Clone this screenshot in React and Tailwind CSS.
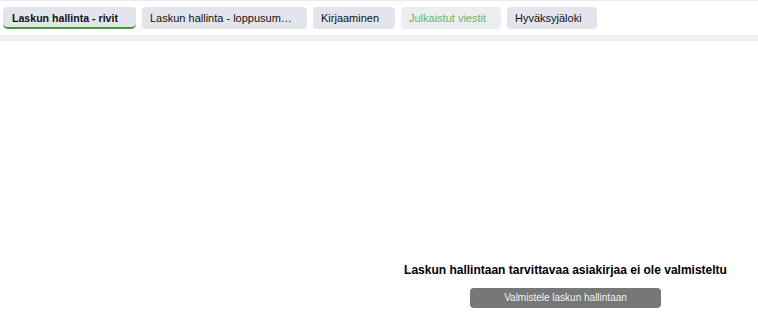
import React from "react";

const tabs = [
  { label: "Laskun hallinta - rivit", active: true, w: "w-[133px]" },
  { label: "Laskun hallinta - loppusummat", w: "w-[165px]" },
  { label: "Kirjaaminen", w: "w-[82px]" },
  { label: "Julkaistut viestit", muted: true, w: "w-[100px]" },
  { label: "Hyväksyjäloki", w: "w-[90px]" },
];

function Tab({ tab }) {
  return (
    <div
      className={`${tab.w} h-[22px] rounded-[4px] px-[8px] flex items-center leading-none truncate ${
        tab.active
          ? "bg-[#e3e5ec] text-[#111] text-[10.6px] font-bold pl-[9px] pt-[3px] border-b-2 border-[#3d9c2f] rounded-b-[5px]"
          : tab.muted
          ? "bg-[#eceef2] text-[#66b866] text-[11px]"
          : "bg-[#e3e5ec] text-[#111] text-[11px]"
      }`}
    >
      <span className="truncate block">{tab.label}</span>
    </div>
  );
}

export default function App() {
  return (
    <div className="w-[758px] h-[329px] bg-white flex flex-col font-['Liberation_Sans',Arial,sans-serif] border-t border-[#ececf0]">
      {/* Tabs */}
      <div className="flex gap-[6px] px-[3px] pt-[6px]">
        {tabs.map((t) => (
          <Tab key={t.label} tab={t} />
        ))}
      </div>
      <div className="mt-[6px] h-[6px] bg-[#eeeff3]" />

      {/* Content */}
      <div className="flex-1 grid grid-cols-2">
        <div />
        <div className="flex flex-col items-center justify-end pb-[21px] pr-[6px]">
          <h2 className="text-[12px] font-bold text-black leading-none">
            Laskun hallintaan tarvittavaa asiakirjaa ei ole valmisteltu
          </h2>
          <button className="mt-[12px] w-[191px] h-[20px] rounded-[4px] bg-[#777777] text-[#f2f2f2] text-[10px] leading-none">
            Valmistele laskun hallintaan
          </button>
        </div>
      </div>
    </div>
  );
}
